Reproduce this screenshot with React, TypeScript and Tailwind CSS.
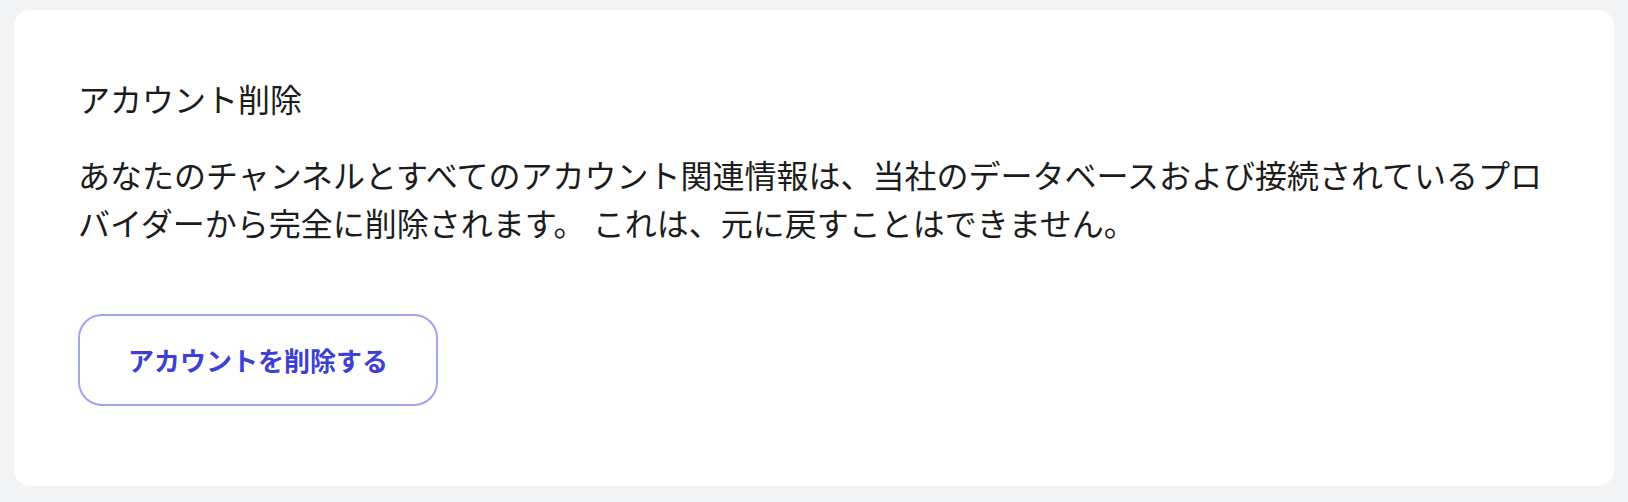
export default function App() {
  return (
    <div
      className="min-h-screen bg-[#f3f4f6] px-[14px] pt-[10px] pb-[17px]"
      style={{ fontFamily: '"Noto Sans CJK JP", "Noto Sans", sans-serif' }}
    >
      <section className="rounded-2xl bg-white pl-16 pr-[60px] pt-16 pb-[80px]">
        <h2 className="text-[32px] leading-[48px] font-normal text-[#1c1c1c]">アカウント削除</h2>
        <p className="mt-7 text-[32px] leading-[48px] text-[#1c1c1c]">
          あなたのチャンネルとすべてのアカウント関連情報は、当社のデータベースおよび接続されているプロバイダーから完全に削除されます。 これは、元に戻すことはできません。
        </p>
        <button
          type="button"
          className="mt-[68px] rounded-[24px] border-2 border-[#a0a3f0] bg-white px-12 py-6 text-[26px] leading-[40px] font-bold text-[#3d3fd6]"
        >
          アカウントを削除する
        </button>
      </section>
    </div>
  );
}
